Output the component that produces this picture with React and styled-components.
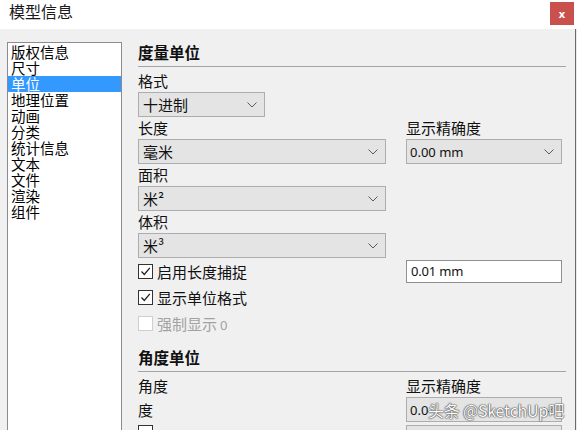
import React from "react";
import styled, { createGlobalStyle } from "styled-components";

const Global = createGlobalStyle`
  html, body { margin: 0; padding: 0; background: #e9e9e9; }
  body { width: 577px; height: 430px; overflow: hidden; }
  * { box-sizing: border-box; }
`;

const CJK = `"Noto Sans CJK SC", "Noto Sans", sans-serif`;
const LATIN = `"Noto Sans", "Open Sans", sans-serif`;

const Window = styled.div`
  position: relative;
  width: 577px;
  height: 430px;
  display: flex;
  flex-direction: column;
  overflow: hidden;
  font-family: ${CJK};
  color: #111;
`;

const TitleBar = styled.div`
  height: 29px;
  flex: none;
  background: #ffffff;
  display: flex;
  align-items: flex-start;
  justify-content: space-between;
  padding: 0 3px 0 9px;
`;

const Title = styled.div`
  font-size: 16px;
  line-height: 22px;
  color: #1a1a1a;
`;

const CloseButton = styled.div`
  margin-top: 2px;
  width: 24px;
  height: 23px;
  background: #c9504d;
  color: #fff;
  display: flex;
  align-items: center;
  justify-content: center;
  font-family: ${LATIN};
  font-weight: 700;
  font-size: 11px;
`;

const Body = styled.div`
  flex: 1;
  width: 576px;
  background: #f0f0f0;
  border-right: 1px solid #6a6a6a;
  display: flex;
  align-items: flex-start;
  padding: 13px 0 0 7px;
  gap: 16px;
`;

const NavList = styled.div`
  flex: none;
  width: 115px;
  height: 420px;
  background: #fff;
  border: 1px solid #8a8c92;
  padding: 1px 0 0 0;
  display: flex;
  flex-direction: column;
`;

const NavItem = styled.div`
  height: 16px;
  line-height: 16px;
  font-size: 14.5px;
  padding-left: 3px;
  white-space: nowrap;
  background: ${(p) => (p.$selected ? "#3399ff" : "transparent")};
  color: ${(p) => (p.$selected ? "#fff" : "#000")};
`;

const Panel = styled.div`
  width: 428px;
  display: flex;
  flex-direction: column;
`;

const SectionTitle = styled.div`
  font-size: 15.5px;
  font-weight: 700;
  line-height: 20px;
  height: 20px;
  margin-top: ${(p) => p.$top || 0}px;
`;

const Rule = styled.div`
  height: 1px;
  margin: 4px 0 3px 0;
  background: #a3a3a3;
`;

const Grid = styled.div`
  display: grid;
  grid-template-columns: 248px 156px;
  column-gap: 20px;
  align-items: center;
`;

const Label = styled.div`
  height: 22px;
  line-height: 22px;
  font-size: 15px;
  white-space: nowrap;
`;

const Select = styled.div`
  width: ${(p) => (p.$w ? `${p.$w}px` : "100%")};
  height: 25px;
  border: 1px solid #adadad;
  background: #e4e4e4;
  display: flex;
  align-items: center;
  justify-content: space-between;
  padding: 0 7px 0 ${(p) => (p.$latin ? 3 : 4)}px;
  font-family: ${(p) => (p.$latin ? LATIN : CJK)};
  font-size: ${(p) => (p.$latin ? "13px" : "15px")};
  white-space: nowrap;
`;

const TextInput = styled.div`
  height: 23px;
  border: 1px solid #8f8f8f;
  background: #fff;
  display: flex;
  align-items: center;
  padding-left: 4px;
  font-family: ${LATIN};
  font-size: 13px;
  letter-spacing: -0.2px;
`;

const CheckRow = styled.div`
  height: 26px;
  display: flex;
  align-items: center;
  gap: 4px;
  font-size: 15px;
  color: ${(p) => (p.$disabled ? "#a2a2a2" : "#111")};
  white-space: nowrap;
`;

const Box = styled.div`
  width: 15px;
  height: 15px;
  flex: none;
  border: 1px solid ${(p) => (p.$disabled ? "#cfcfcf" : "#333")};
  background: #fff;
  display: flex;
  align-items: center;
  justify-content: center;
`;

const Zero = styled.span`
  font-family: ${LATIN};
  font-size: 13px;
  margin-left: 3px;
`;

const PartialRow = styled.div`
  display: grid;
  grid-template-columns: 248px 156px;
  column-gap: 20px;
  margin-top: 3px;
`;

const Watermark = styled.div`
  position: absolute;
  left: 428px;
  top: 400px;
  font-family: ${CJK};
  font-size: 16px;
  line-height: 20px;
  color: #fafafa;
  letter-spacing: -0.2px;
  text-shadow: 0 0 1px #444, 0 0 1px #444, 0 0 2px #666;
  white-space: nowrap;
`;

const Chevron = () => (
  <svg width="10" height="6" viewBox="0 0 10 6">
    <path d="M0.5 0.5 L5 5 L9.5 0.5" fill="none" stroke="#5a5a5a" strokeWidth="1" />
  </svg>
);

const Check = () => (
  <svg width="11" height="11" viewBox="0 0 11 11">
    <path d="M1.5 5.5 L4.3 8.5 L9.8 1.8" fill="none" stroke="#222" strokeWidth="1.3" />
  </svg>
);

const Dropdown = ({ children, w, latin }) => (
  <Select $w={w} $latin={latin}>
    <span>{children}</span>
    <Chevron />
  </Select>
);

const CheckBox = ({ checked, disabled, children }) => (
  <CheckRow $disabled={disabled}>
    <Box $disabled={disabled}>{checked && <Check />}</Box>
    <span>{children}</span>
  </CheckRow>
);

const navItems = ["版权信息", "尺寸", "单位", "地理位置", "动画", "分类", "统计信息", "文本", "文件", "渲染", "组件"];

export default function App() {
  return (
    <>
      <Global />
      <Window>
        <TitleBar>
          <Title>模型信息</Title>
          <CloseButton>x</CloseButton>
        </TitleBar>
        <Body>
          <NavList>
            {navItems.map((n) => (
              <NavItem key={n} $selected={n === "单位"}>{n}</NavItem>
            ))}
          </NavList>
          <Panel>
            <SectionTitle>度量单位</SectionTitle>
            <Rule />
            <Grid>
              <Label>格式</Label>
              <div />
              <Dropdown w={127}>十进制</Dropdown>
              <div />
              <Label>长度</Label>
              <Label>显示精确度</Label>
              <Dropdown>毫米</Dropdown>
              <Dropdown latin>0.00 mm</Dropdown>
              <Label>面积</Label>
              <div />
              <Dropdown>米²</Dropdown>
              <div />
              <Label>体积</Label>
              <div />
              <Dropdown>米³</Dropdown>
              <div />
              <CheckBox checked>启用长度捕捉</CheckBox>
              <TextInput>0.01 mm</TextInput>
              <CheckBox checked>显示单位格式</CheckBox>
              <div />
              <CheckBox disabled>
                强制显示<Zero>0</Zero>
              </CheckBox>
              <div />
            </Grid>
            <SectionTitle $top={11}>角度单位</SectionTitle>
            <Rule />
            <Grid>
              <Label>角度</Label>
              <Label>显示精确度</Label>
              <Label>度</Label>
              <Dropdown latin>0.0</Dropdown>
            </Grid>
            <PartialRow>
              <Box />
              <Select />
            </PartialRow>
          </Panel>
        </Body>
        <Watermark>头条 @SketchUp吧</Watermark>
      </Window>
    </>
  );
}
